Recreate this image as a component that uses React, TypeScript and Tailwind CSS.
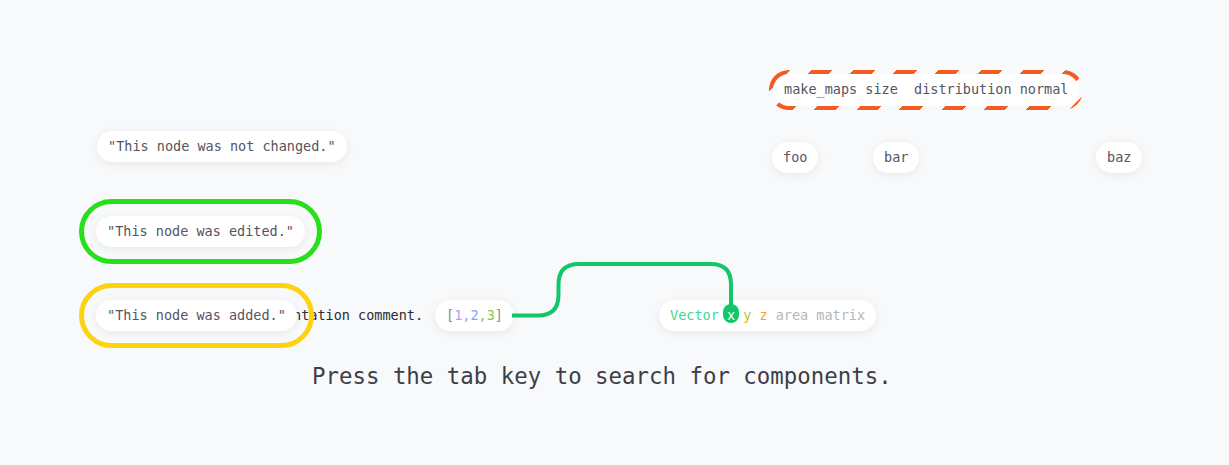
import React from "react";

const mono = "font-['DejaVu_Sans_Mono',monospace]";

function Node({ className = "", children }: { className?: string; children: React.ReactNode }) {
  return (
    <div
      className={`flex h-[31px] items-center whitespace-pre rounded-full bg-white px-[11px] text-[13.5px] leading-none text-[#55555f] shadow-[0_2px_10px_rgba(0,0,0,0.07)] ${className}`}
    >
      {children}
    </div>
  );
}

export default function App() {
  return (
    <div className={`relative h-[465px] w-[1229px] overflow-hidden bg-[#f8f9fb] ${mono}`}>
      {/* documentation comment (partially hidden) */}
      <div className="absolute left-[163px] top-[300px] z-0 flex h-[31px] items-center whitespace-pre text-[13.5px] text-[#2b2b30]">
        This is a documentation comment.
      </div>

      {/* not changed */}
      <Node className="absolute left-[97px] top-[131px] z-10">"This node was not changed."</Node>

      {/* edited */}
      <div className="absolute left-[79px] top-[199px] z-10 rounded-full border-[5px] border-[#26e01a] p-[12px]">
        <Node>"This node was edited."</Node>
      </div>

      {/* added */}
      <div className="absolute left-[79px] top-[283px] z-10 rounded-full border-[5px] border-[#ffd20f] p-[12px]">
        <Node>"This node was added."</Node>
      </div>

      {/* [1,2,3] */}
      <Node className="absolute left-[435px] top-[300px] z-10">
        <span className="text-[#8c8c94]">[</span>
        <span className="text-[#b99cf6]">1</span>
        <span className="text-[#8ea2fb]">,2</span>
        <span className="text-[#8cc63e]">,3</span>
        <span className="text-[#8c8c94]">]</span>
      </Node>

      {/* Vector node */}
      <Node className="absolute left-[659px] top-[300px] z-10">
        <span className="text-[#3fd58e]">Vector </span>
        <span className="relative">
          <span className="absolute left-[-4px] top-[-5px] h-[19px] w-[16px] rounded-[8px] bg-[#12c76a]" />
          <span className="relative text-white">x</span>
        </span>
        <span className="text-[#b7c22b]"> y</span>
        <span className="text-[#f8a53c]"> z</span>
        <span className="text-[#b6b6ba]"> area matrix</span>
      </Node>

      {/* make_maps with striped ring */}
      <div className="absolute left-[769px] top-[70px] z-10 rounded-full bg-[repeating-linear-gradient(135deg,#f35b21_0px,#f35b21_15px,transparent_15px,transparent_30px)] p-[4px]">
        <Node className="h-[32px] shadow-none">make_maps size  distribution normal</Node>
      </div>

      {/* foo bar baz */}
      <Node className="absolute left-[772px] top-[142px] z-10">foo</Node>
      <Node className="absolute left-[873px] top-[142px] z-10">bar</Node>
      <Node className="absolute left-[1096px] top-[142px] z-10">baz</Node>

      {/* edge */}
      <svg className="pointer-events-none absolute left-0 top-0 z-20" width="1229" height="465" viewBox="0 0 1229 465">
        <path
          d="M512 315.5 H538 Q558.5 315.5 558.5 295 V284.5 Q558.5 264 579 264 H711 Q731 264 731 284.5 V309"
          fill="none"
          stroke="#12c76a"
          strokeWidth="4"
        />
      </svg>

      {/* hint */}
      <div className="absolute left-[312px] top-[360px] whitespace-pre text-[22.4px] leading-[32px] text-[#3e3e46]">
        Press the tab key to search for components.
      </div>
    </div>
  );
}
